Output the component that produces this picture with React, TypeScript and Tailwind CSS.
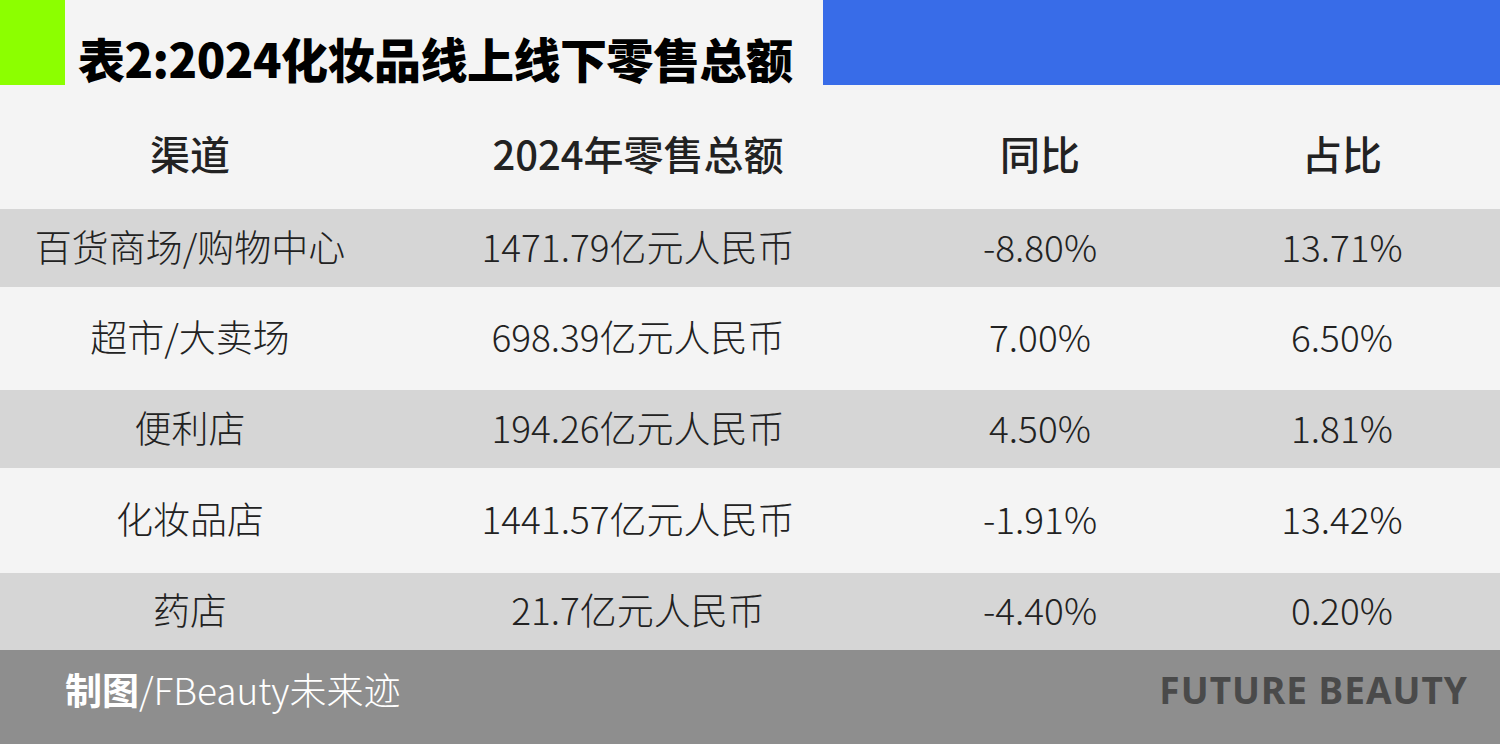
const rows = [
  { name: "百货商场/购物中心", total: "1471.79亿元人民币", yoy: "-8.80%", share: "13.71%", h: "h-[78px]", bg: "bg-[#d6d6d6]" },
  { name: "超市/大卖场", total: "698.39亿元人民币", yoy: "7.00%", share: "6.50%", h: "h-[103px]", bg: "bg-[#f4f4f4]" },
  { name: "便利店", total: "194.26亿元人民币", yoy: "4.50%", share: "1.81%", h: "h-[78px]", bg: "bg-[#d6d6d6]" },
  { name: "化妆品店", total: "1441.57亿元人民币", yoy: "-1.91%", share: "13.42%", h: "h-[105px]", bg: "bg-[#f4f4f4]" },
  { name: "药店", total: "21.7亿元人民币", yoy: "-4.40%", share: "0.20%", h: "h-[77px]", bg: "bg-[#d6d6d6]" },
];

const cols = "grid grid-cols-[380px_516px_288px_316px] items-center text-center";

export default function App() {
  return (
    <div
      className="w-[1500px] h-[744px] bg-[#f4f4f4] text-[#222] overflow-hidden"
      style={{ fontFamily: '"Noto Sans CJK SC", "Noto Sans", sans-serif' }}
    >
      {/* title bar */}
      <div className="flex h-[85px]">
        <div className="w-[65px] bg-[#8cff00]" />
        <div className="flex-1 flex items-end pl-[13px]">
          <h1 className="text-[47px] font-black leading-none text-black pb-[4px] tracking-[-0.5px]">
            表2:2024化妆品线上线下零售总额
          </h1>
        </div>
        <div className="w-[677px] bg-[#386ce8]" />
      </div>

      {/* header */}
      <div className={`${cols} h-[124px] pt-[12px] text-[40px] font-medium`}>
        <div>渠道</div>
        <div>2024年零售总额</div>
        <div>同比</div>
        <div>占比</div>
      </div>

      {rows.map((r) => (
        <div key={r.name} className={`${cols} ${r.h} ${r.bg} text-[37px] font-light pb-[3px]`}>
          <div>{r.name}</div>
          <div>{r.total}</div>
          <div>{r.yoy}</div>
          <div>{r.share}</div>
        </div>
      ))}

      {/* footer */}
      <div className="h-[94px] bg-[#8e8e8e] flex items-center justify-between pl-[65px] pr-[32px] pb-[16px]">
        <div className="text-[37px] text-white leading-none">
          <span className="font-bold">制图</span>
          <span className="font-light">/FBeauty未来迹</span>
        </div>
        <div
          className="text-[37px] font-bold text-[#4a4a4a] leading-none tracking-[1px]"
          style={{ fontFamily: '"Noto Sans", sans-serif' }}
        >
          FUTURE BEAUTY
        </div>
      </div>
    </div>
  );
}
